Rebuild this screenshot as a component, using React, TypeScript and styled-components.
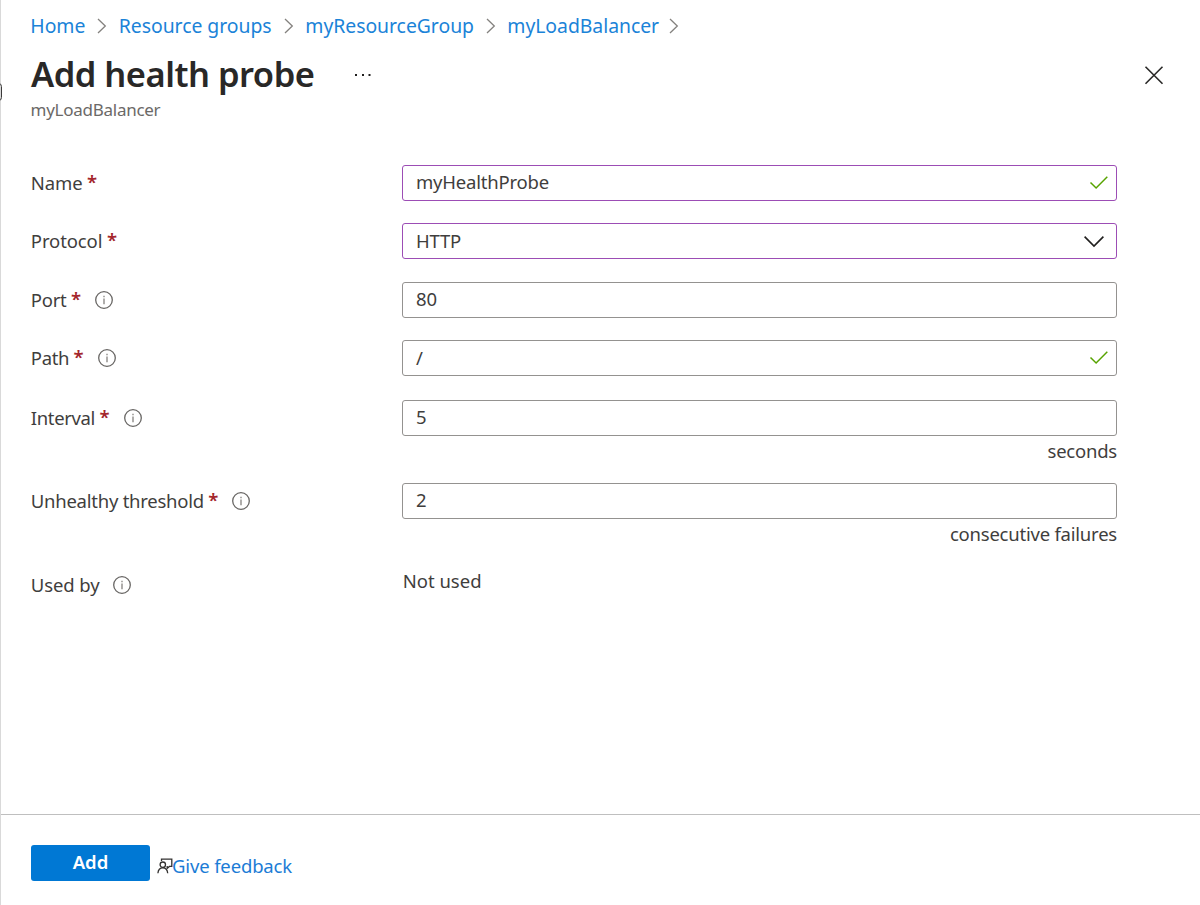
import React from 'react';
import styled, { createGlobalStyle } from 'styled-components';

const GlobalStyle = createGlobalStyle`
  *, *::before, *::after { box-sizing: border-box; }
  body {
    margin: 0;
    background: #fff;
    color: #3f3e3d;
    font-family: 'Noto Sans', 'Open Sans', sans-serif;
    font-size: 18.5px;
    overflow: hidden;
  }
  svg { display: block; flex: none; fill: none; }
`;

const Blade = styled.div`
  position: relative;
  display: flex;
  flex-direction: column;
  width: 1200px;
  height: 905px;
  border-left: 1px solid #d9d9d9;
`;

const EdgeHandle = styled.span`
  position: absolute;
  left: -6px;
  top: 83px;
  width: 7px;
  height: 18px;
  border: 1px solid #3b3a39;
  border-radius: 4px;
`;

const Breadcrumb = styled.nav`
  display: flex;
  align-items: center;
  height: 28px;
  margin: 12px 0 0 29.3px;
  font-size: 19.4px;
  letter-spacing: -0.04px;
`;

const Crumb = styled.a<{ $width: number }>`
  width: ${(p) => p.$width}px;
  color: #1b83d8;
  line-height: 28px;
  white-space: nowrap;
  text-decoration: none;
`;

const Separator = styled.svg`
  width: 10px;
  height: 16px;
  margin: 0 11.5px 0 12px;
  stroke: #84827f;
  stroke-width: 1.3;
`;

const Header = styled.header`
  display: flex;
  align-items: center;
  height: 56px;
  margin-top: 7px;
  padding: 0 36.5px 0 30px;
`;

const Title = styled.h1`
  width: 322px;
  height: 56px;
  margin: 0;
  color: #292827;
  font-size: 34.5px;
  font-weight: 600;
  line-height: 54px;
  letter-spacing: -0.5px;
  white-space: nowrap;
`;

const IconButton = styled.button`
  display: flex;
  padding: 0;
  border: 0;
  background: none;
`;

const CloseButton = styled(IconButton)`
  margin-left: auto;
`;

const Subtitle = styled.p`
  height: 22px;
  margin: -4px 0 0 29.6px;
  color: #6b6967;
  font-size: 17px;
  line-height: 22px;
  letter-spacing: -0.27px;
`;

const Form = styled.form`
  flex: 1;
  padding: 44px 83px 0 29px;
`;

const Row = styled.div<{ $height: number }>`
  display: grid;
  grid-template-columns: 372px 1fr;
  align-items: start;
  height: ${(p) => p.$height}px;
`;

const Label = styled.label<{ $tracking?: number }>`
  display: flex;
  align-items: center;
  height: 36px;
  padding: 0 0 1px 0.8px;
  letter-spacing: ${(p) => p.$tracking ?? -0.1}px;
  white-space: nowrap;
`;

const Required = styled.span`
  margin: -2px 1px 0 4.5px;
  color: #a4262c;
  font-weight: 600;
  letter-spacing: 0;
`;

const InfoIcon = styled.svg`
  width: 20px;
  height: 20px;
  margin: 1px 0 0 12px;
`;

const Field = styled.div<{ $edited?: boolean }>`
  display: flex;
  align-items: center;
  justify-content: space-between;
  height: 36px;
  padding: 0 7px 0 13px;
  border: 1px solid ${(p) => (p.$edited ? '#9c4db5' : '#949290')};
  border-radius: 3px;
  letter-spacing: -0.2px;
`;

const Value = styled.span<{ $lineHeight: number }>`
  height: 34px;
  line-height: ${(p) => p.$lineHeight}px;
`;

const Unit = styled.div`
  height: 30px;
  line-height: 29px;
  text-align: right;
  letter-spacing: -0.22px;
`;

const StaticValue = styled.div`
  height: 28px;
  padding-left: 0.7px;
  line-height: 28px;
`;

const Footer = styled.footer`
  display: flex;
  height: 91px;
  padding: 30px 0 0 30px;
  border-top: 1px solid #bfbfbf;
`;

const AddButton = styled.button`
  width: 119px;
  height: 36px;
  padding: 0 0 2px;
  border: 0;
  border-radius: 3px;
  background: #0078d4;
  color: #fff;
  font: 600 18.5px/34px 'Noto Sans', 'Open Sans', sans-serif;
`;

const Feedback = styled.a`
  display: flex;
  height: 30px;
  margin: 6px 0 0 8px;
  color: #1b7cd6;
  line-height: 30px;
  letter-spacing: -0.15px;
  text-decoration: none;
`;

const FeedbackIcon = styled.svg`
  width: 16px;
  height: 16px;
  margin: 7px -1px 0 -1px;
  stroke: #323130;
  stroke-width: 1.3;
`;

const Chevron = () => (
  <Separator viewBox="0 0 10 16">
    <path d="M1 1l7.3 7L1 15" />
  </Separator>
);

const Info = () => (
  <InfoIcon viewBox="0 0 20 20">
    <circle cx="10" cy="10" r="8.3" stroke="#686664" strokeWidth="1.3" />
    <path d="M10 8.6v5.6M10 5.7v1.5" stroke="#85827f" strokeWidth="1.3" />
  </InfoIcon>
);

const Check = () => (
  <svg width="20" height="16" viewBox="0 0 20 16">
    <path d="M1.5 7.5l5.6 5.5L18.3 1.700" stroke="#57a300" strokeWidth="1.5" />
  </svg>
);

const DropdownArrow = () => (
  <svg width="29" height="16" viewBox="0 0 29 16">
    <path d="M4.6 3.6l9.4 9.4 9.4-9.4" stroke="#201f1e" strokeWidth="1.6" />
  </svg>
);

const crumbs = [
  { text: 'Home', width: 55 },
  { text: 'Resource groups', width: 153 },
  { text: 'myResourceGroup', width: 168.5 },
  { text: 'myLoadBalancer', width: 149.5 },
];

interface FieldData {
  label: string;
  value: string;
  height: number;
  lineHeight?: number;
  tracking?: number;
  info?: boolean;
  edited?: boolean;
  mark?: 'check' | 'arrow';
  unit?: string;
}

const fields: FieldData[] = [
  { label: 'Name', value: 'myHealthProbe', height: 58, edited: true, mark: 'check' },
  { label: 'Protocol', value: 'HTTP', height: 59, lineHeight: 34, edited: true, mark: 'arrow' },
  { label: 'Port', value: '80', height: 58, tracking: -0.25, info: true },
  { label: 'Path', value: '/', height: 60, lineHeight: 34, tracking: -0.35, info: true, mark: 'check' },
  { label: 'Interval', value: '5', height: 83, tracking: -0.35, info: true, unit: 'seconds' },
  { label: 'Unhealthy threshold', value: '2', height: 84, tracking: -0.25, info: true, unit: 'consecutive failures' },
];

export default function App() {
  return (
    <>
      <GlobalStyle />
      <Blade>
        <EdgeHandle />
        <Breadcrumb>
          {crumbs.map((c) => (
            <React.Fragment key={c.text}>
              <Crumb $width={c.width}>{c.text}</Crumb>
              <Chevron />
            </React.Fragment>
          ))}
        </Breadcrumb>
        <Header>
          <Title>Add health probe</Title>
          <IconButton aria-label="More">
            <svg width="20" height="6" viewBox="0 0 20 6">
              <path d="M2 3h2M9 3h2M15.5 3h2" stroke="#201f1e" strokeWidth="2" />
            </svg>
          </IconButton>
          <CloseButton aria-label="Close">
            <svg width="20" height="20" viewBox="0 0 20 20">
              <path d="M1.5 1.8l17 17M18.5 1.8l-17 17" stroke="#292827" strokeWidth="1.6" />
            </svg>
          </CloseButton>
        </Header>
        <Subtitle>myLoadBalancer</Subtitle>
        <Form>
          {fields.map((f) => (
            <Row key={f.label} $height={f.height}>
              <Label $tracking={f.tracking}>
                {f.label}
                <Required>*</Required>
                {f.info && <Info />}
              </Label>
              <div>
                <Field $edited={f.edited}>
                  <Value $lineHeight={f.lineHeight ?? 32}>{f.value}</Value>
                  {f.mark === 'check' && <Check />}
                  {f.mark === 'arrow' && <DropdownArrow />}
                </Field>
                {f.unit && <Unit>{f.unit}</Unit>}
              </div>
            </Row>
          ))}
          <Row $height={36}>
            <Label>
              Used by
              <Info />
            </Label>
            <StaticValue>Not used</StaticValue>
          </Row>
        </Form>
        <Footer>
          <AddButton>Add</AddButton>
          <Feedback>
            <FeedbackIcon viewBox="0 0 16 16">
              <path d="M4.5 3V1.2h10.3v7.2h-2.4l-2.2 2V8" />
              <circle cx="5.8" cy="6.7" r="2.7" />
              <path d="M.9 15.2c.3-3.4 2.2-5.4 4.9-5.4s4.6 2 4.9 5.4" />
            </FeedbackIcon>
            Give feedback
          </Feedback>
        </Footer>
      </Blade>
    </>
  );
}
